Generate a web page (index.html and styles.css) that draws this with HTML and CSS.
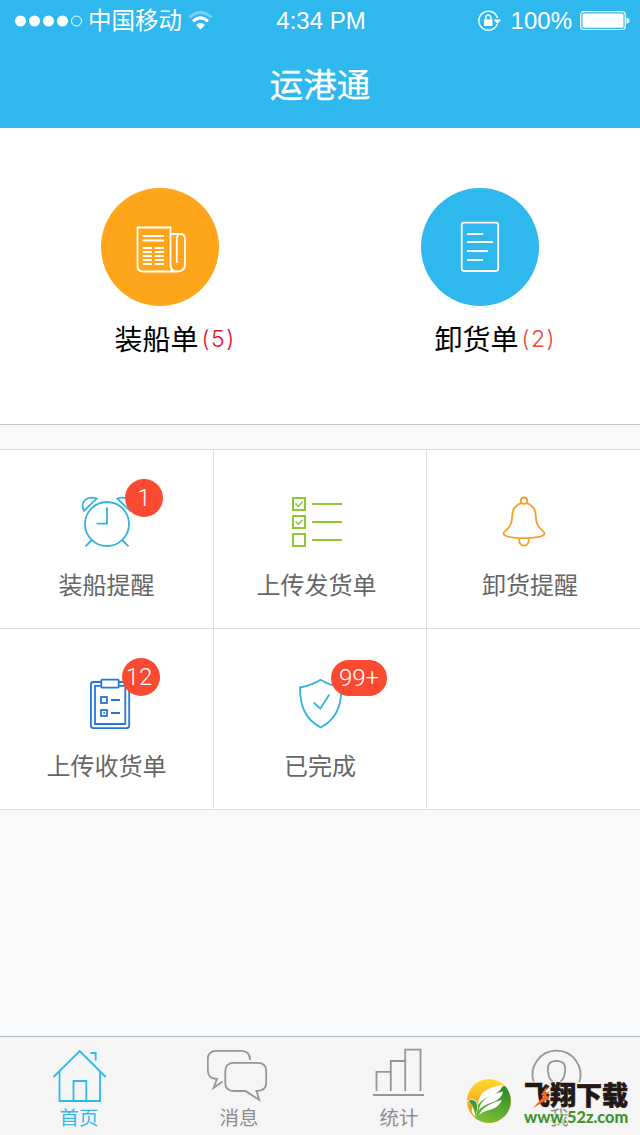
FILE: index.html
```html
<!DOCTYPE html>
<html lang="zh-CN">
<head>
	<meta charset="UTF-8">
	<title>运港通</title>
	<link rel="stylesheet" href="styles.css">
</head>
<body>
<header>
	<div class="status">
		<div class="status-left">
			<svg class="signal" width="68" height="12">
				<circle cx="5.5" cy="6" r="5.5"></circle>
				<circle cx="19.5" cy="6" r="5.5"></circle>
				<circle cx="33.5" cy="6" r="5.5"></circle>
				<circle cx="47.5" cy="6" r="5.5"></circle>
				<circle class="empty" cx="61.5" cy="6" r="5"></circle>
			</svg>
			<span class="carrier">中国移动</span>
			<svg class="wifi" width="26" height="20">
				<path class="faint" d="M1.5 6.5 Q12.500 -3.500 23.500 6.500"></path>
				<path d="M5 10.300 Q12.500 3.500 20 10.300"></path>
				<path class="dot" d="M8 14 Q12.500 10 17 14 L12.500 18.500 Z"></path>
			</svg>
		</div>
		<div class="time">4:34 PM</div>
		<div class="status-right">
			<svg class="lock" width="24" height="22">
				<path class="ring" d="M19.300 14 A9.500 9.500 0 1 1 19.500 8"></path>
				<path d="M15.500 9.500 H23.300 L19.400 14 Z"></path>
				<rect x="6" y="9.500" width="8.500" height="6.500"></rect>
				<path class="ring" d="M7.800 10 V7.500 A2.500 2.500 0 0 1 12.800 7.500 V10"></path>
			</svg>
			<span class="percent">100%</span>
			<svg class="battery" width="50" height="20">
				<rect class="case" x="0.700" y="0.700" width="44.500" height="17.800" rx="3"></rect>
				<rect x="2.500" y="2.500" width="41" height="14.200" rx="1.500"></rect>
				<path d="M46.500 6.500 Q49.500 7 49.500 9.600 Q49.500 12.200 46.500 12.700 Z"></path>
			</svg>
		</div>
	</div>
	<h1>运港通</h1>
</header>

<section class="orders">
	<a class="order">
		<svg class="orange" width="118" height="118">
			<circle cx="59" cy="59" r="59"></circle>
			<path d="M69.500 46 V39.500 H36.500 V78 Q36.500 83.500 42 83.500 H76.500 Q84 83.500 84 76 V51 Q84 46 79 46 H69.500 V77 Q69.500 83.500 76.300 83.500"></path>
			<path d="M75.800 75 V51 Q76 47.500 77.500 46.500"></path>
			<path d="M41.700 48 H63 M41.700 52.500 H63"></path>
			<path d="M41.700 60 H51 M41.700 64 H51 M41.700 68 H51 M41.700 72 H51 M41.700 76 H51"></path>
			<path d="M53.700 60 H63 M53.700 64 H63 M53.700 68 H63 M53.700 72 H63 M53.700 76 H63"></path>
		</svg>
		<div class="order-name">装船单<span class="count red">(5)</span></div>
	</a>
	<a class="order">
		<svg class="blue" width="118" height="118">
			<circle cx="59" cy="59" r="59"></circle>
			<rect x="40.700" y="34.700" width="36.500" height="48.300" rx="2.500"></rect>
			<path d="M46 46 H62 M46 54 H72 M46 63 H67 M46 72 H62"></path>
		</svg>
		<div class="order-name">卸货单<span class="count">(2)</span></div>
	</a>
</section>

<section class="grid">
	<a class="cell">
		<div class="icon">
			<svg class="cyan" width="57" height="56">
				<circle cx="29" cy="30" r="22"></circle>
				<path d="M29 13.300 V29.700 H18.500"></path>
				<path d="M13.700 46 L7.500 52.300 M44.300 46 L50.500 52.300"></path>
				<path d="M6 16.700 C1.500 8 9 1 18.700 4.700 Z"></path>
				<path d="M52 16.700 C56.500 8 49 1 39.300 4.700 Z"></path>
			</svg>
			<span class="badge badge-one">1</span>
		</div>
		<p>装船提醒</p>
	</a>
	<a class="cell">
		<div class="icon">
			<svg class="green" width="56" height="56">
				<rect x="1" y="4" width="12" height="12"></rect>
				<rect x="1" y="22" width="12" height="12"></rect>
				<rect x="1" y="40" width="12" height="12"></rect>
				<path class="tick" d="M3.500 9.500 L6.300 12.500 L10.700 7.500 M3.500 27.500 L6.300 30.500 L10.700 25.500"></path>
				<path d="M20 10 H50 M20 28 H50 M20 46 H50"></path>
			</svg>
		</div>
		<p class="shifted">上传发货单</p>
	</a>
	<a class="cell last">
		<div class="icon">
			<svg class="amber" width="56" height="56">
				<circle cx="22" cy="6.700" r="3.200"></circle>
				<path d="M19 9.300 C12 11.500 10.500 16 10.300 21 C10 29 8.500 33 3.300 37 C0 39.500 1.500 41 5 42.300 C14 44.700 30 44.700 39 42.300 C42.500 41 44 39.500 40.700 37 C35.500 33 34 29 33.700 21 C33.500 16 32 11.500 25 9.300"></path>
				<path d="M17.300 44.500 C15.500 54 28.500 54 26.700 44.500"></path>
			</svg>
		</div>
		<p>卸货提醒</p>
	</a>
	<a class="cell lower">
		<div class="icon">
			<svg class="navy" width="57" height="56">
				<path d="M23.300 7 H15.500 Q12.900 7 12.900 9.500 V50.500 Q12.900 53.100 15.500 53.100 H48.500 Q51.200 53.100 51.200 50.500 V9.500 Q51.200 7 48.500 7 H40.700"></path>
				<path d="M23.300 10.800 H17 V49 H47.300 V10.800 H40.700"></path>
				<rect x="23.300" y="4.700" width="17.400" height="8" rx="1"></rect>
				<rect x="23" y="22" width="6" height="6"></rect>
				<rect x="23" y="35" width="6" height="6"></rect>
				<path d="M33 25 H42 M33 38 H42 M25.500 38 H26.800"></path>
			</svg>
			<span class="badge badge-two">12</span>
		</div>
		<p>上传收货单</p>
	</a>
	<a class="cell lower">
		<div class="icon">
			<svg class="cyan" width="56" height="56">
				<path d="M28.700 4.700 C22 9 15 11 8 12.500 C8 31 13 44 28.700 52.500 C44.400 44 49.400 31 49.400 12.500 C42.400 11 35.400 9 28.700 4.700 Z"></path>
				<path d="M21.700 27.500 L28.300 33.700 L37.300 19.500"></path>
			</svg>
			<span class="badge badge-many">99+</span>
		</div>
		<p>已完成</p>
	</a>
	<a class="cell lower last"></a>
</section>

<nav>
	<a class="tab active">
		<svg width="64" height="60">
			<path d="M6.500 32 L32.700 6 L58.700 32"></path>
			<path d="M12.500 26.500 V56 H53 V26.500"></path>
			<path d="M26.500 56 V36 H39.300 V56"></path>
			<path d="M43.500 8 H48.700 V15.500"></path>
		</svg>
		<span>首页</span>
	</a>
	<a class="tab">
		<svg width="64" height="60">
			<path d="M43 15 C43 9 40 5.800 34 5.800 H9.500 C3.500 5.800 0.800 9 0.800 14 V25 C0.800 31 4 34 10 34 L6.500 43 L15.500 36.500"></path>
			<path d="M27 17.800 H50.500 C56.500 17.800 59.200 21 59.200 26 V38 C59.200 43 56 46 49.500 46 L52.300 55 L38.500 46 H27 C21 46 18.300 43 18.300 38 V26 C18.300 21 21 17.800 27 17.800 Z"></path>
		</svg>
		<span>消息</span>
	</a>
	<a class="tab">
		<svg width="64" height="60">
			<path d="M9.500 46 V26.800 H23.800 M23.800 46 V16 H38.200 M38.200 46 V4.700 H53.500 V46"></path>
			<path d="M6 50 H57"></path>
		</svg>
		<span>统计</span>
	</a>
	<a class="tab">
		<svg width="64" height="60">
			<path d="M6.800 37.500 A24 24 0 1 1 52.200 37.500"></path>
			<path d="M25 40 V36 Q21.500 33 21.500 28.500 Q20.300 27 21 24.500 Q20 16 29.500 15.800 Q39 16 38 24.500 Q38.700 27 37.500 28.500 Q37.500 33 34 36 V40"></path>
		</svg>
		<span>我</span>
	</a>
	<div class="mark">
		<svg width="48" height="46">
			<defs>
				<linearGradient id="sun" x1="0" y1="0" x2="0" y2="1">
					<stop offset="0" stop-color="#ffd92e"></stop>
					<stop offset="1" stop-color="#f08a0c"></stop>
				</linearGradient>
				<linearGradient id="leaf" x1="0.700" y1="0" x2="0.300" y2="1">
					<stop offset="0" stop-color="#2f8a2c"></stop>
					<stop offset="1" stop-color="#7fc534"></stop>
				</linearGradient>
			</defs>
			<circle cx="23" cy="22" r="22" fill="url(#sun)"></circle>
			<path fill="url(#leaf)" d="M2 21 Q9 19 12 25 Q18 11 39 7 A22 22 0 0 1 9 39 Q10 28 2 21 Z"></path>
			<path fill="#fff" d="M12 26 Q12 9 37 6 Q35 13 25 17 Q16 20 12 26 Z"></path>
			<path fill="#fff" d="M13 31 Q14 18 37 12.500 Q36 20 26 23.500 Q17 26 13 31 Z"></path>
			<path fill="#fff" d="M13 36 Q17 26 36 21 Q33 28 25 30.500 Q17 32 13 36 Z"></path>
			<path fill="#fff" d="M0.500 22 Q8 17.500 11.500 24 Q12.500 30 9.500 38 Q4 33 6.500 28 Q6 23 0.500 22 Z"></path>
			<path fill="url(#leaf)" d="M2.500 21.500 Q8 19.500 10.500 24 Q12 30 9.500 38 Q8 27 2.500 21.500 Z"></path>
		</svg>
		<div class="mark-text">
			<b>飞翔下载</b>
			<i>www.52z.com</i>
			<svg class="bolt" width="20" height="24"><path d="M15 1 L9 9.500 L12 11 L1 23 L18 13 L14 10 L19 6 L13.500 8 Z"></path></svg>
		</div>
	</div>
</nav>
</body>
</html>
```
FILE: styles.css
```css
html, body {
  margin: 0;
  padding: 0;
}

body {
  display: flex;
  flex-direction: column;
  width: 640px;
  height: 1135px;
  overflow: hidden;
  background: #f7f9fb;
  font-family: "Liberation Sans", "Noto Sans CJK SC", sans-serif;
}

svg {
  display: block;
  flex: none;
  fill: none;
  stroke-width: 1.8px;
}

h1, p {
  margin: 0;
  font-weight: normal;
}

/* header */
header {
  height: 128px;
  background: #2fb8ee;
  color: #fff;
}

.status {
  display: grid;
  grid-template-columns: 1fr auto 1fr;
  align-items: center;
  height: 40px;
  padding: 0 10px 0 15px;
  font-size: 24px;
  line-height: 42px;
}

.status svg {
  fill: #fff;
}

.status-left, .status-right {
  display: flex;
  align-items: center;
}

.status-right {
  justify-content: flex-end;
}

.signal .empty {
  fill: none;
  stroke: #fff;
  stroke-width: 1px;
}

.carrier {
  margin: 0 6px 0 5px;
  font-size: 23.5px;
}

.status .wifi {
  fill: none;
  stroke: #fff;
  stroke-width: 3px;
}

.wifi .faint {
  opacity: .35;
}

.wifi .dot {
  fill: #fff;
  stroke: none;
}

.time {
  margin-right: 3px;
  font-size: 24px;
}

.lock .ring {
  fill: none;
  stroke: #fff;
  stroke-width: 1.4px;
}

.percent {
  margin: 0 8px 0 9px;
}

.battery .case {
  fill: none;
  stroke: #fff;
  stroke-width: 1.2px;
}

h1 {
  padding-top: 2px;
  font-size: 33.5px;
  line-height: 88px;
  text-align: center;
  -webkit-text-stroke: .3px #fff;
}

/* two big buttons */
.orders {
  display: flex;
  height: 296px;
  background: #fff;
  border-bottom: 1px solid #c8c8c8;
}

.order {
  display: flex;
  flex-direction: column;
  align-items: center;
  flex: 1;
  padding-top: 60px;
}

.order svg {
  stroke: #fff;
}

.order circle {
  stroke: none;
}

.orange circle {
  fill: #fea51c;
}

.blue circle {
  fill: #2fb8ee;
}

.order-name {
  display: flex;
  align-items: center;
  margin-top: 13px;
  padding-left: 29px;
  font-size: 28px;
  line-height: 40px;
  color: #000;
}

.count {
  width: 33px;
  margin-left: 3px;
  padding-bottom: 3px;
  font-family: Inter, sans-serif;
  font-weight: 300;
  font-size: 23px;
  letter-spacing: 1.5px;
  color: #f0463c;
}

.count.red {
  color: #e60f32;
}

/* menu */
.grid {
  display: grid;
  grid-template-columns: 214px 213px 213px;
  grid-template-rows: 179px 181px;
  margin-top: 24px;
  border-top: 1px solid #dcdcdc;
}

.cell {
  display: flex;
  flex-direction: column;
  align-items: center;
  padding-top: 44px;
  background: #fff;
  border-right: 1px solid #dfdfdf;
  border-bottom: 1px solid #dfdfdf;
}

.cell.lower {
  padding-top: 46px;
}

.cell.last {
  padding-right: 7px;
  border-right: none;
}

.cell p {
  margin-top: 24px;
  font-size: 24px;
  line-height: 24px;
  color: #666;
}

.cell p.shifted {
  margin-right: 7px;
}

.icon {
  position: relative;
}

.cyan {
  stroke: #32b4dc;
}

.green {
  stroke: #8cc832;
  stroke-width: 2px;
}

.green .tick {
  stroke-width: 1.5px;
}

.amber {
  stroke: #f5a028;
}

.navy {
  stroke: #2378dc;
}

.badge {
  position: absolute;
  width: 38px;
  height: 38px;
  border-radius: 19px;
  background: #fa4b32;
  color: #fff;
  font-family: Roboto, sans-serif;
  font-weight: 300;
  font-size: 24px;
  line-height: 39px;
  text-align: center;
}

.badge-one {
  left: 47px;
  top: -15px;
}

.badge-two {
  left: 44px;
  top: -17px;
  width: 34px;
  padding-right: 4px;
}

.badge-many {
  left: 39px;
  top: -15px;
  width: 56px;
  height: 36px;
  line-height: 37px;
}

/* bottom bar */
nav {
  position: relative;
  display: flex;
  height: 98px;
  margin-top: auto;
  background: #f5f5f5;
  border-top: 1px solid #b4bcc3;
}

.tab {
  display: flex;
  flex-direction: column;
  align-items: center;
  flex: 1;
  padding: 8px 2px 0 0;
  font-size: 19.5px;
  line-height: 24px;
  color: #8c8c8c;
}

.tab svg {
  stroke: #969696;
}

.tab span {
  margin-top: 1px;
}

.tab.active {
  color: #37b9e6;
}

.tab.active svg {
  stroke: #2db9eb;
}

.mark {
  position: absolute;
  left: 466px;
  top: 42px;
  display: flex;
  gap: 10px;
}

.mark-text {
  position: relative;
  display: flex;
  flex-direction: column;
  padding-top: 4px;
  text-shadow: 0 0 2px #f5f5f5, 0 0 2px #f5f5f5, 0 0 3px #f5f5f5, 0 0 3px #f5f5f5;
}

.mark-text b {
  font-size: 26px;
  line-height: 26px;
  font-weight: 900;
  color: #231815;
  -webkit-text-stroke: .6px #231815;
}

.mark-text i {
  font-family: Lato, sans-serif;
  font-style: normal;
  font-weight: 900;
  font-size: 16.3px;
  line-height: 16px;
  color: #3f9430;
}

.bolt {
  position: absolute;
  left: 8px;
  top: 6px;
}

.bolt path {
  fill: #f0661e;
}
```
